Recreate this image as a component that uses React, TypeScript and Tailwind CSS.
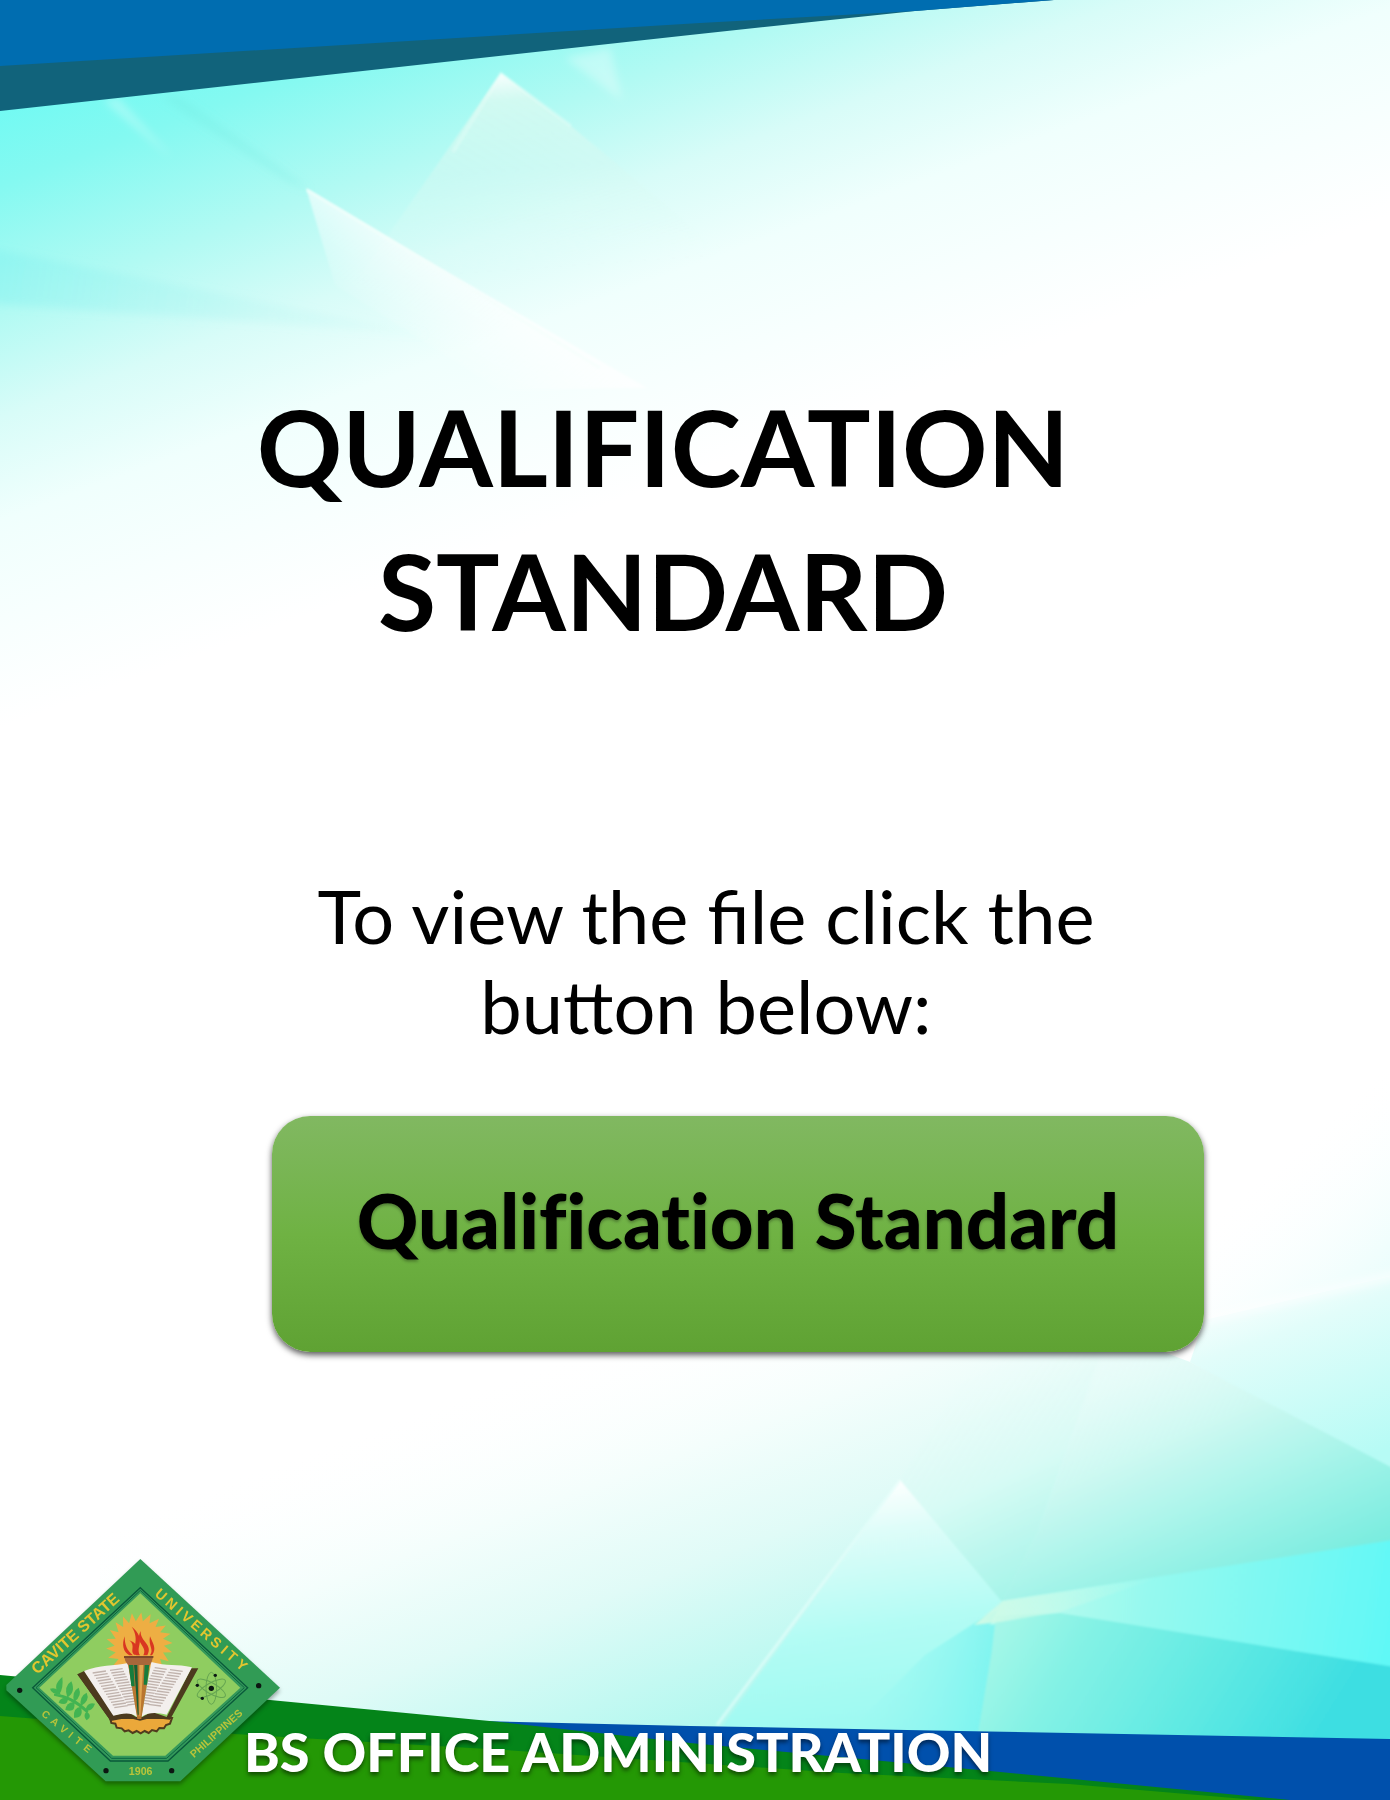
import React from "react";

function Backdrop() {
  return (
    <svg
      aria-hidden="true"
      className="absolute inset-0 h-full w-full"
      viewBox="0 0 1390 1800"
      preserveAspectRatio="none"
    >
      <defs>
        <linearGradient id="sky" gradientUnits="userSpaceOnUse" x1="30" y1="70" x2="240" y2="640">
          <stop offset="0" stopColor="#6cfaf3" />
          <stop offset="0.16" stopColor="#84f9f1" />
          <stop offset="0.36" stopColor="#b2faf3" />
          <stop offset="0.52" stopColor="#d8fcf8" />
          <stop offset="0.68" stopColor="#f0fffd" />
          <stop offset="1" stopColor="#ffffff" />
        </linearGradient>
        <linearGradient id="peakB" gradientUnits="userSpaceOnUse" x1="501" y1="73" x2="515" y2="270">
          <stop offset="0" stopColor="#fff" stopOpacity="0.95" />
          <stop offset="0.14" stopColor="#dffaf1" stopOpacity="0.75" />
          <stop offset="0.5" stopColor="#d4f9f2" stopOpacity="0.5" />
          <stop offset="1" stopColor="#e8fdf9" stopOpacity="0" />
        </linearGradient>
        <linearGradient id="peakC" gradientUnits="userSpaceOnUse" x1="400" y1="240" x2="355" y2="310">
          <stop offset="0" stopColor="#fff" stopOpacity="0.7" />
          <stop offset="1" stopColor="#fff" stopOpacity="0" />
        </linearGradient>
        <linearGradient id="shade" gradientUnits="userSpaceOnUse" x1="0" y1="270" x2="430" y2="330">
          <stop offset="0" stopColor="#7aeeee" stopOpacity="0.35" />
          <stop offset="1" stopColor="#b8f5ef" stopOpacity="0.1" />
        </linearGradient>
        <linearGradient id="low" gradientUnits="userSpaceOnUse" x1="620" y1="1330" x2="790" y2="1790">
          <stop offset="0" stopColor="#fff" stopOpacity="0" />
          <stop offset="0.28" stopColor="#f4fefc" />
          <stop offset="0.5" stopColor="#e0fbf7" />
          <stop offset="0.9" stopColor="#a6f7ed" />
          <stop offset="1" stopColor="#a6f7ed" />
        </linearGradient>
        <linearGradient id="f1" gradientUnits="userSpaceOnUse" x1="890" y1="1480" x2="930" y2="1740">
          <stop offset="0" stopColor="#ffffff" />
          <stop offset="0.18" stopColor="#dffdf9" />
          <stop offset="0.55" stopColor="#b2fcf4" />
          <stop offset="1" stopColor="#98f8f1" />
        </linearGradient>
        <linearGradient id="f2" gradientUnits="userSpaceOnUse" x1="900" y1="1390" x2="1000" y2="1610">
          <stop offset="0" stopColor="#effdfa" stopOpacity="0" />
          <stop offset="0.5" stopColor="#d8fbf5" />
          <stop offset="1" stopColor="#a2f4e8" />
        </linearGradient>
        <linearGradient id="f3" gradientUnits="userSpaceOnUse" x1="1120" y1="1355" x2="1230" y2="1610">
          <stop offset="0" stopColor="#effdfa" stopOpacity="0.2" />
          <stop offset="0.35" stopColor="#cef9f2" />
          <stop offset="0.75" stopColor="#98f2e6" />
          <stop offset="1" stopColor="#78ecdf" />
        </linearGradient>
        <linearGradient id="f4" gradientUnits="userSpaceOnUse" x1="1040" y1="1590" x2="1390" y2="1650">
          <stop offset="0" stopColor="#b8fbee" />
          <stop offset="0.3" stopColor="#96f9ef" />
          <stop offset="1" stopColor="#60f8f6" />
        </linearGradient>
        <linearGradient id="f5" gradientUnits="userSpaceOnUse" x1="1000" y1="1610" x2="1290" y2="1790">
          <stop offset="0" stopColor="#a8f7e8" />
          <stop offset="0.25" stopColor="#84f2e5" />
          <stop offset="0.6" stopColor="#62eae3" />
          <stop offset="1" stopColor="#3cdee2" />
        </linearGradient>
        <linearGradient id="f6" gradientUnits="userSpaceOnUse" x1="860" y1="1670" x2="990" y2="1700">
          <stop offset="0" stopColor="#9cf9f2" stopOpacity="0.1" />
          <stop offset="1" stopColor="#7cf4f0" />
        </linearGradient>
        <linearGradient id="f7" gradientUnits="userSpaceOnUse" x1="1240" y1="1220" x2="1330" y2="1470">
          <stop offset="0" stopColor="#fff" stopOpacity="0" />
          <stop offset="0.45" stopColor="#e2fdfa" />
          <stop offset="1" stopColor="#b6fbf5" />
        </linearGradient>
        <linearGradient id="f8" gradientUnits="userSpaceOnUse" x1="1270" y1="1160" x2="1400" y2="1310">
          <stop offset="0" stopColor="#fff" stopOpacity="0" />
          <stop offset="1" stopColor="#e2fdfb" />
        </linearGradient>
        <linearGradient id="ridge" gradientUnits="userSpaceOnUse" x1="980" y1="1620" x2="1160" y2="1590">
          <stop offset="0" stopColor="#d4fbe6" stopOpacity="0.9" />
          <stop offset="1" stopColor="#c0fbee" stopOpacity="0" />
        </linearGradient>
        <filter id="soft" x="-20%" y="-20%" width="140%" height="140%">
          <feGaussianBlur stdDeviation="4" />
        </filter>
        <filter id="edge">
          <feGaussianBlur stdDeviation="1" />
        </filter>
      </defs>
      <rect width="1390" height="1800" fill="#fff" />
      <rect width="1390" height="1000" fill="url(#sky)" />
      <path d="M-20 246L430 335L200 318L-20 303Z" fill="url(#shade)" filter="url(#soft)" />
      <path d="M103 100L118 98L172 158Z" fill="#fff" fillOpacity="0.3" filter="url(#soft)" />
      <path d="M160 96L178 96L310 190L290 182Z" fill="#6fe9df" fillOpacity="0.3" filter="url(#soft)" />
      <path d="M565 58L610 48L622 100Z" fill="#fff" fillOpacity="0.3" filter="url(#soft)" />
      <path d="M501 73L571 126L720 250L560 320L350 290Z" fill="url(#peakB)" filter="url(#edge)" />
      <path d="M453 152L501 74L571 126" fill="none" stroke="#effff8" strokeOpacity="0.3" strokeWidth="4" filter="url(#edge)" />
      <path d="M306 188L420 256L647 388L500 390L335 285Z" fill="url(#peakC)" filter="url(#edge)" />
      <path d="M307 190L420 258L600 368" fill="none" stroke="#f4fffb" strokeOpacity="0.6" strokeWidth="3" filter="url(#edge)" />

      <path d="M1000 1000H1390V1276L1204 1320Z" fill="url(#f8)" />
      <path d="M1204 1320L1390 1276V1480L1190 1362Z" fill="url(#f7)" />
      <path d="M1204 1320L1400 1274" stroke="#fff" strokeOpacity="0.6" strokeWidth="8" filter="url(#soft)" />
      <path d="M100 1800V1350L700 1200L1000 1290L1190 1362L1390 1472V1800Z" fill="url(#low)" />
      <g filter="url(#edge)">
        <path d="M900 1480L985 1340H1105L1038 1531L1002 1602Z" fill="url(#f2)" />
        <path d="M1105 1352L1190 1362L1400 1472V1545L1002 1602L1038 1531Z" fill="url(#f3)" />
        <path d="M900 1480L1002 1602L976 1624L973 1760H698Z" fill="url(#f1)" />
        <path d="M998 1610L976 1622L925 1655L820 1760H978Z" fill="url(#f6)" />
        <path d="M1002 1601L1400 1539V1675L1060 1613L990 1625Z" fill="url(#f4)" />
        <path d="M996 1616L1060 1613L1400 1668V1770H972L992 1650Z" fill="url(#f5)" />
      </g>
      <path d="M717 1725L900 1480" stroke="#e8fffb" strokeOpacity="0.6" strokeWidth="3" filter="url(#edge)" />
      <path d="M974 1625L1003 1601L1160 1577L1060 1612L1000 1622Z" fill="url(#ridge)" filter="url(#edge)" />

      <path d="M0 0H1054L915 11L690 35L0 111Z" fill="#11637b" />
      <path d="M0 0H1054L915 11L700 23L0 66Z" fill="#006db0" />
      <path d="M480 1721L690 1726L960 1731L1390 1739V1800H480Z" fill="#0050ac" />
      <path d="M0 1675L270 1700L500 1722L690 1743L990 1771L1290 1800H0Z" fill="#048419" />
      <path d="M0 1716L235 1734L505 1750L842 1773L1069 1784L1257 1800H0Z" fill="#249805" />
    </svg>
  );
}

const sunPoints = Array.from({ length: 44 }, (_, i) => {
  const angle = (i * Math.PI) / 22 - Math.PI / 2;
  const r = i % 2 === 0 ? 100 : 74;
  const twist = i % 2 === 0 ? 0.06 : 0;
  return `${(418 + r * Math.cos(angle + twist)).toFixed(1)},${(318 + r * Math.sin(angle + twist)).toFixed(1)}`;
}).join(" ");

const pageLines = Array.from({ length: 14 }, (_, i) => i);

function Emblem() {
  return (
    <svg
      role="img"
      aria-label="Cavite State University emblem"
      className="w-[274px] shrink-0 drop-shadow-[0_3px_2px_rgba(0,0,0,0.35)]"
      viewBox="18 58 822 668"
    >
      <path d="M421 58L840 444L541 725H317L19 452V436Z" fill="#319b55" />
      <path d="M421 144L743 444L504 664H331L98 444Z" fill="#34985a" stroke="#09593a" strokeWidth="4" />
      <path d="M421 152L733 444L500 656H335L108 444Z" fill="none" stroke="#0b6540" strokeWidth="3" />
      <path d="M421 161L721 444L496 648H339L118 444Z" fill="#8fcd60" />
      <g fill="#0c1712">
        <circle cx="59" cy="452" r="8" />
        <circle cx="776" cy="438" r="8" />
        <circle cx="318" cy="693" r="8" />
        <circle cx="515" cy="693" r="8" />
      </g>
      <polygon points={sunPoints} fill="#eeae43" />
      <path
        d="M330 535H516L510 552L498 556L492 566L478 565L470 575L456 571L446 580L434 574L422 581L410 574L398 580L386 572L374 575L365 566L350 564L346 552L334 550Z"
        fill="#eba83a"
        stroke="#513c1d"
        strokeWidth="6"
      />
      <path d="M232 404L252 400L338 528L385 516L416 538L455 516L500 532L574 386L595 386L510 540L455 534L420 543L385 534L332 544Z" fill="#4c3a1e" />
      <path d="M232 404L254 393L344 530L332 544Z" fill="#4c3a1e" />
      <path d="M252 394C300 374 340 380 384 370L412 532C390 515 365 522 340 528Z" fill="#f3efed" />
      <path d="M576 383C530 372 500 380 454 367L424 532C450 514 475 520 500 525Z" fill="#f3efed" />
      <g stroke="#c0b3ad" strokeWidth="4" fill="none">
        {pageLines.map((i) => (
          <path
            key={i}
            d={`M${278 + i * 5} ${400 + i * 8}l40 -6M${330 + i * 4} ${392 + i * 8}l38 -5M${548 - i * 5} ${395 + i * 8}l-38 -5M${500 - i * 4} ${389 + i * 8}l-36 -5`}
          />
        ))}
      </g>
      <path d="M384 374H450L424 538H412Z" fill="#b97630" />
      <path d="M386 374H400L404 440H394Z M434 374H448L441 435H431Z" fill="#167c3d" />
      <path d="M402 374H412L416 525H413Z" fill="#165f35" />
      <path d="M418 374H430L421 530H418Z" fill="#e0a650" />
      <path d="M372 349H460L456 364L450 376H384L376 364Z" fill="#a8673a" />
      <path d="M372 349H460V355H372Z" fill="#7f4929" />
      <g fill="#d93621">
        <path d="M388 347C369 337 365 315 374 290C374 315 380 332 399 347Z" />
        <path d="M409 347C391 328 423 304 395 261C442 300 405 319 420 347Z" />
        <path d="M402 345C389 333 408 319 388 302C424 317 405 331 418 345Z" />
        <path d="M430 347C445 320 403 312 422 274C420 307 460 313 442 347Z" />
        <path d="M450 347C463 329 444 320 450 290C457 309 472 327 456 347Z" />
      </g>
      <g fill="#42b452">
        <path d="M162 462Q216 464 266 514L260 520Q213 475 162 468Z" />
        <path d="M178 464Q155 438 187 412Q191 445 178 464Z" />
        <path d="M202 474Q190 440 214 425Q228 457 202 474Z" />
        <path d="M222 487Q214 455 236 444Q248 469 222 487Z" />
        <path d="M242 500Q238 469 260 459Q271 483 242 500Z" />
        <path d="M256 512Q262 485 285 492Q276 517 256 512Z" />
        <path d="M182 465Q154 464 150 447Q174 441 182 465Z" />
        <path d="M204 477Q202 501 176 489Q182 470 204 477Z" />
        <path d="M223 488Q228 521 196 511Q200 486 223 488Z" />
        <path d="M243 501Q252 536 222 534Q218 504 243 501Z" />
        <path d="M260 515Q280 532 260 542Q247 530 260 515Z" />
      </g>
      <g fill="none" stroke="#65a551" strokeWidth="3">
        <ellipse cx="634" cy="446" rx="16" ry="48" />
        <ellipse cx="634" cy="446" rx="16" ry="48" transform="rotate(60 634 446)" />
        <ellipse cx="634" cy="446" rx="16" ry="48" transform="rotate(120 634 446)" />
      </g>
      <g fill="#0c1712">
        <circle cx="634" cy="446" r="8" />
        <circle cx="646" cy="407" r="5" />
        <circle cx="592" cy="437" r="5" />
        <circle cx="607" cy="476" r="5" />
      </g>
      <g fill="#e3c62f" fontFamily="Liberation Sans, sans-serif" fontWeight="700">
        <text transform="translate(112 406) rotate(-42)" fontSize="48">CAVITE STATE</text>
        <text transform="translate(462 166) rotate(41)" fontSize="43" x="0 41 83 104 142 180 220 261 284 322">UNIVERSITY</text>
        <g fill="#b9c43a">
          <text transform="translate(122 526) rotate(39)" fontSize="31" x="0 35 70 104 128 162">CAVITE</text>
          <text transform="translate(582 656) rotate(-42)" fontSize="32">PHILIPPINES</text>
        </g>
        <text x="422" y="706" textAnchor="middle" fontSize="32" fill="#b9c43a">1906</text>
      </g>
    </svg>
  );
}

export default function App() {
  return (
    <div className="relative flex min-h-screen flex-col overflow-hidden bg-white font-[Lato,sans-serif] text-black">
      <Backdrop />
      <main className="relative flex flex-col items-center pt-[374px]">
        <h1 className="pr-16 text-center text-[106px] leading-[144px] font-bold">
          QUALIFICATION
          <br />
          STANDARD
        </h1>
        <p className="mt-[209px] pl-[22px] text-center text-[74px] leading-[90px] font-normal">
          To view the file click the
          <br />
          button below:
        </p>
        <div className="mt-[65px] flex w-full justify-center pl-[86px]">
          <button
            type="button"
            className="h-[236px] w-[932px] rounded-[38px] bg-linear-to-b from-[#81b861] via-[#6fb243] to-[#5fa233] pb-7 text-[76px] font-black shadow-[0_3px_6px_rgba(0,0,0,0.65)] [font-variant-ligatures:none] [text-shadow:0_2px_3px_rgba(0,0,0,0.3)]"
          >
            Qualification Standard
          </button>
        </div>
      </main>
      <footer className="relative mt-auto flex items-end pb-[18px] pl-[6px]">
        <Emblem />
        <p className="-ml-9 text-[54px] leading-[60px] font-black whitespace-nowrap text-white [text-shadow:0_3px_4px_rgba(0,0,0,0.5)]">
          BS OFFICE ADMINISTRATION
        </p>
      </footer>
    </div>
  );
}
